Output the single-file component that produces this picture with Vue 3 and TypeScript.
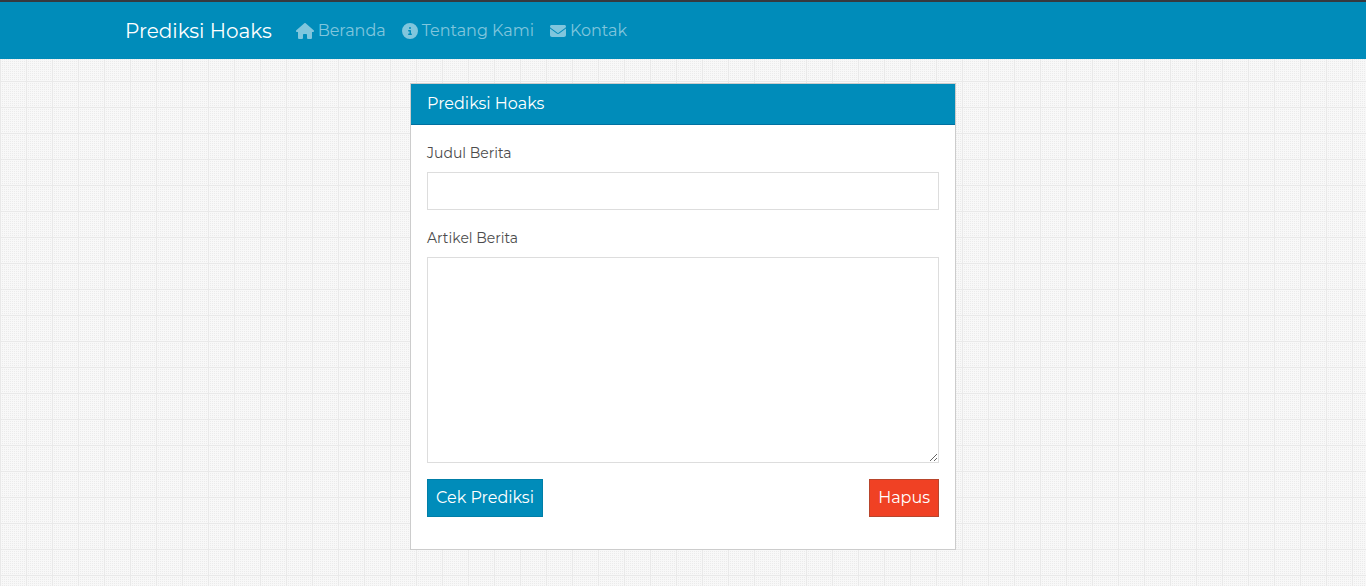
<script setup lang="ts">
import { ref } from 'vue'

interface NavItem {
  label: string
  viewBox: string
  kind: string
  path: string
}

const items: NavItem[] = [
  {
    label: 'Beranda',
    viewBox: '0 0 576 512',
    kind: 'wide',
    path: 'M575.8 255.5c0 18-15 32.1-32 32.1h-32l.7 160.2c0 2.7-.2 5.4-.5 8.1V472c0 22.1-17.9 40-40 40H456c-1.1 0-2.2 0-3.3-.1c-1.4 .1-2.8 .1-4.2 .1H416 392c-22.1 0-40-17.9-40-40V448 384c0-17.7-14.3-32-32-32H256c-17.7 0-32 14.3-32 32v64 24c0 22.1-17.9 40-40 40H160 128.1c-1.5 0-3-.1-4.5-.2c-1.2 .1-2.4 .2-3.6 .2H104c-22.1 0-40-17.9-40-40V360c0-.9 0-1.9 .1-2.8V287.6H32c-18 0-32-14-32-32.1c0-9 3-17 10-24L266.4 8c7-7 15-8 22-8s15 2 21 7L564.8 231.5c8 7 12 15 11 24z',
  },
  {
    label: 'Tentang Kami',
    viewBox: '0 0 512 512',
    kind: 'square',
    path: 'M256 512A256 256 0 1 0 256 0a256 256 0 1 0 0 512zM216 336h24V272H216c-13.3 0-24-10.7-24-24s10.7-24 24-24h48c13.3 0 24 10.7 24 24v88h8c13.3 0 24 10.7 24 24s-10.7 24-24 24H216c-13.3 0-24-10.7-24-24s10.7-24 24-24zm40-208a32 32 0 1 1 0 64 32 32 0 1 1 0-64z',
  },
  {
    label: 'Kontak',
    viewBox: '0 0 512 512',
    kind: 'square',
    path: 'M48 64C21.5 64 0 85.5 0 112c0 15.1 7.1 29.3 19.2 38.4L236.8 313.6c11.4 8.5 27 8.5 38.4 0L492.8 150.4c12.1-9.1 19.2-23.3 19.2-38.4c0-26.5-21.5-48-48-48H48zM0 176V384c0 35.3 28.7 64 64 64H448c35.3 0 64-28.7 64-64V176L294.4 339.2c-22.8 17.1-54 17.1-76.8 0L0 176z',
  },
]

const title = ref('')
const article = ref('')

function clearForm(): void {
  title.value = ''
  article.value = ''
}
</script>

<template>
  <header class="navbar">
    <nav class="container">
      <a class="brand" href="#">Prediksi Hoaks</a>
      <ul class="links">
        <li v-for="item in items" :key="item.label">
          <a class="link" href="#">
            <svg :class="['icon', item.kind]" :viewBox="item.viewBox" aria-hidden="true">
              <path :d="item.path" />
            </svg>
            <span>{{ item.label }}</span>
          </a>
        </li>
      </ul>
    </nav>
  </header>

  <main class="card">
    <h1 class="card-header">Prediksi Hoaks</h1>
    <form class="card-body" @submit.prevent>
      <label class="label" for="title">Judul Berita</label>
      <input id="title" v-model="title" class="control" type="text" />
      <label class="label" for="article">Artikel Berita</label>
      <textarea id="article" v-model="article" class="control area"></textarea>
      <div class="actions">
        <button class="button" type="submit">Cek Prediksi</button>
        <button class="button danger" type="button" @click="clearForm">Hapus</button>
      </div>
    </form>
  </main>
</template>

<style>
body {
  color: #444;
  font-family: Montserrat, Inter, "Open Sans", sans-serif;
  font-size: 16px;
  line-height: 24px;
  background-color: #f8f8f8;
  background-image:
    linear-gradient(90deg, transparent 25px, #e9e9e9 25px),
    linear-gradient(transparent 25px, #e9e9e9 25px),
    linear-gradient(90deg, transparent 1px, #f8f8f8 1px),
    linear-gradient(#f8f8f8 1px, #ebebeb 1px);
  background-size: 26px 26px, 26px 26px, 2px 2px, 2px 2px;
  background-position: 1px 4px, 1px 4px, 0 0, 0 0;
}
</style>

<style scoped>
.navbar {
  background: #008cba;
  border-top: 2px solid #36393f;
}

.container {
  display: flex;
  align-items: center;
  gap: 24px;
  box-sizing: border-box;
  max-width: 1140px;
  min-height: 57px;
  margin: 0 auto;
  padding: 0 12px;
}

.brand {
  color: #fff;
  font-size: 20px;
  text-decoration: none;
  white-space: nowrap;
}

.links {
  display: flex;
  gap: 16px;
  margin: 0;
  padding: 0;
  list-style: none;
}

.link {
  display: flex;
  align-items: center;
  gap: 4px;
  color: #80c6dd;
  font-size: 16px;
  text-decoration: none;
  white-space: nowrap;
}

.icon {
  height: 16px;
  fill: currentColor;
}

.icon.wide {
  width: 18px;
}

.icon.square {
  width: 16px;
}

.card {
  box-sizing: border-box;
  max-width: 546px;
  margin: 24px auto 36px;
  background: #fff;
  border: 1px solid #ccc;
}

.card-header {
  margin: 0;
  padding: 8px 16px;
  color: #fff;
  font-size: 16px;
  font-weight: 400;
  line-height: 24px;
  background: #008cba;
  border-bottom: 1px solid #0070a0;
}

.card-body {
  padding: 16px 16px 32px;
}

.label {
  display: block;
  margin-bottom: 6px;
  color: #4c4c4c;
  font-size: 14px;
  line-height: 25px;
}

.control {
  display: block;
  box-sizing: border-box;
  width: 100%;
  height: 38px;
  margin: 0 0 16px;
  padding: 6px 12px;
  color: #444;
  font: inherit;
  background: #fff;
  border: 1px solid #ddd;
  border-radius: 0;
}

.area {
  height: 206px;
  resize: vertical;
}

.actions {
  display: flex;
  justify-content: space-between;
}

.button {
  padding: 6px 8px;
  color: #fff;
  font: inherit;
  background: #008cba;
  border: 1px solid #007ea7;
  border-radius: 0;
}

.danger {
  background: #f04124;
  border-color: #b8452c;
}
</style>
